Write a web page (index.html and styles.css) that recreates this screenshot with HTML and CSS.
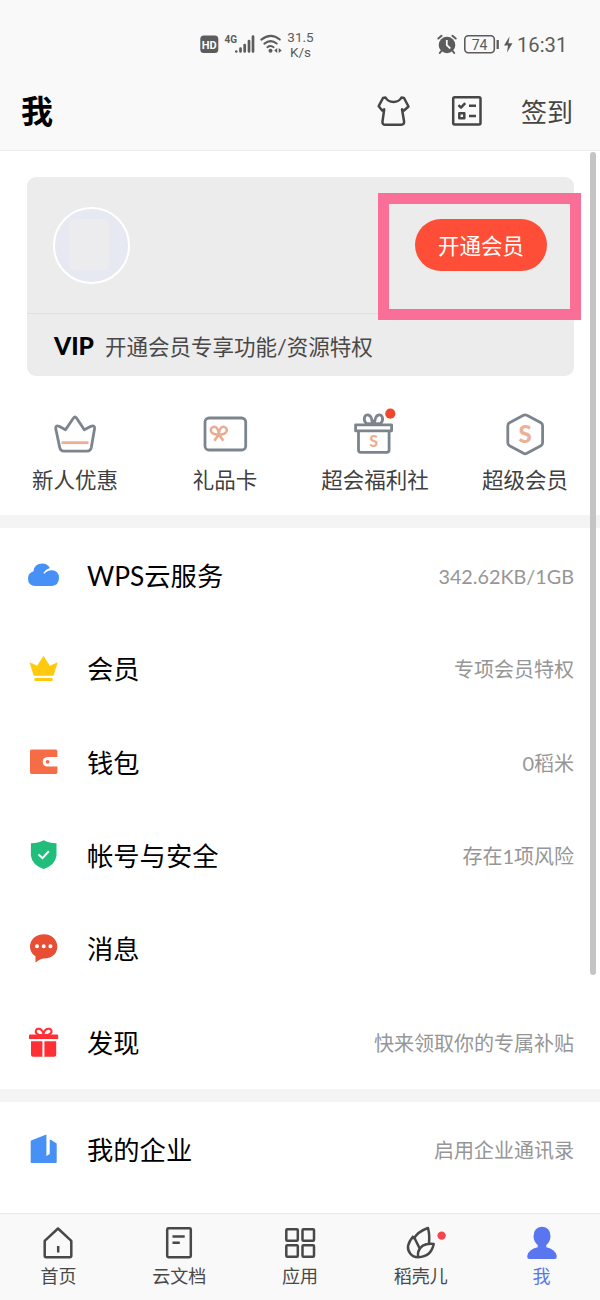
FILE: index.html
```html
<!DOCTYPE html>
<html lang="zh-CN">
<head>
<meta charset="utf-8">
<title>我</title>
<link rel="stylesheet" href="styles.css">
</head>
<body>
<div class="app">
  <header class="top">
    <div class="status">
      <svg class="status-left" width="86" height="28" viewBox="198 30 86 28">
        <rect x="200.300" y="35.500" width="18" height="17.500" rx="3.500" fill="#5c5c5c"/>
        <text x="209.300" y="48.600" class="hd">HD</text>
        <text x="224.500" y="43.300" class="net">4G</text>
        <path d="M236.300 51.500v0M240.500 51.500v-3M244.700 51.500v-6.500M249 51.500v-10.500M253 51.500v-15" class="bars"/>
        <path d="M261.300 39.600q9.500-7.500 18.500 0M264.400 43.600q6.300-5 12.300 0M267.400 47.200q3.200-2.500 6.200 0" class="wifi"/>
        <circle cx="270.500" cy="50.700" r="2" fill="#5c5c5c"/>
        <path d="M277.200 48v5l-3-2.500zM278.700 48v5l3-2.500z" fill="#5c5c5c"/>
      </svg>
      <div class="speed"><span>31.5</span><span>K/s</span></div>
      <svg class="status-right" width="78" height="28" viewBox="436 30 78 28">
        <circle cx="447" cy="45" r="8.300" fill="#5c5c5c"/>
        <path d="M438.300 38.500l3.300-2.700M455.700 38.500l-3.300-2.700M441.300 51l-1.500 2M452.700 51l1.500 2" stroke="#5c5c5c" stroke-width="2" stroke-linecap="round"/>
        <path d="M446.800 40v5.200l3.500 3.300" fill="none" stroke="#f9f9f9" stroke-width="1.800"/>
        <rect x="464.800" y="35.800" width="29.500" height="17" rx="3.500" fill="none" stroke="#5c5c5c" stroke-width="1.600"/>
        <path d="M497.700 40v9" stroke="#5c5c5c" stroke-width="2.300"/>
        <text x="479.500" y="49.600" class="charge">74</text>
        <path d="M509.500 36.500l-5.500 9h4l-1 7 5.500-9.300h-4z" fill="#5c5c5c"/>
      </svg>
      <span class="clock">16:31</span>
    </div>
    <div class="titlebar">
      <h1>我</h1>
      <svg class="line-icon shirt" width="36" height="36" viewBox="376 92 36 36">
        <path d="M385.500 96.500q2.500 4.500 8 4.500t8-4.500l2.500.500 4.500 8.500-4.500 4-2-1.200 2 11.700q.6 3.800-2.800 3.800h-16q-3 0-2.700-3.300l1.700-12.200-2 1.200-3.500-4.300 4.300-8.200z"/>
      </svg>
      <svg class="line-icon tasks" width="36" height="36" viewBox="449 92 36 36">
        <rect x="453.200" y="96.200" width="27.300" height="27.300" rx="1.500"/>
        <path d="M458.500 104.200l2.500 2.500 4.200-4.500M469 104.700h7M469 115h7M459.300 112.200h5v5h-5z"/>
      </svg>
      <span class="signin">签到</span>
    </div>
  </header>

  <main class="content">
    <section class="member-card">
      <div class="profile">
        <div class="avatar"><i></i></div>
        <span class="open-vip">开通会员</span>
      </div>
      <div class="vip-line"><b>VIP</b><span>开通会员专享功能/资源特权</span></div>
      <div class="highlight"></div>
    </section>

    <nav class="quick">
      <div class="quick-item">
        <svg class="outline" width="50" height="50" viewBox="50 409 50 50">
          <path d="M61.500 442.700h27" class="accent"/>
          <path d="M73.500 418q1.500-2 3 0l7.800 11.800 6.700-3.500q4-1.300 3.600 2.200l-3.300 19q-.8 3.700-4.300 3.700H64q-3.500 0-4.300-3.700l-4-19q-.3-3.500 3.300-2.200l6.500 3.500z"/>
        </svg><span>新人优惠</span>
      </div>
      <div class="quick-item">
        <svg class="outline" width="50" height="50" viewBox="200 409 50 50">
          <rect x="205" y="418" width="40.700" height="32" rx="4"/>
          <path d="M218.800 434.300c-9 1-9.500-6-6-7.200s6 2.500 6 7.200c0-4.700 2.500-8.400 6-7.200s3 8.200-6 7.200l-4.500 6.500M218.800 434.300l4.500 6.500" class="bow"/>
        </svg><span>礼品卡</span>
      </div>
      <div class="quick-item">
        <svg class="outline" width="50" height="50" viewBox="350 409 50 50">
          <path d="M371.200 424l-5-.5c-4-5-1-9 2-8.500 3.500.5 4 5 4 9zM375.700 424l5-.5c4-5 1-9-2-8.500-3.500.5-4 5-4 9z"/>
          <rect x="355.600" y="424.800" width="36" height="6"/>
          <path d="M358.500 431v19q0 2.300 2.300 2.300h26q2.300 0 2.300-2.300v-19"/>
          <text x="373.600" y="447" class="money small">S</text>
          <circle cx="390.300" cy="413.700" r="5.100" class="dot"/>
        </svg><span>超会福利社</span>
      </div>
      <div class="quick-item">
        <svg class="outline" width="50" height="50" viewBox="500 409 50 50">
          <path d="M523.500 415.300q1.700-1 3.400 0l14 7.500q1.700 1 1.700 3v17q0 2-1.700 3l-14 7.500q-1.700 1-3.400 0l-14-7.500q-1.700-1-1.700-3v-17q0-2 1.700-3z"/>
          <text x="525.200" y="442.700" class="money">S</text>
        </svg><span>超级会员</span>
      </div>
    </nav>

    <section class="list">
      <div class="row">
        <svg width="34" height="34" viewBox="27 559 34 34">
          <path d="M35.500 586q-7.500-.3-7.500-7.500 0-5.500 5.300-7 1-8 9.200-8 5 0 7.300 4.500-4.500 1.400-6.400 5l1 .8q2.600-3.500 7.300-3.500 7 .3 7.300 7.500 0 7.500-7.300 8.200z" fill="#4790f5"/>
        </svg>
        <span class="label">WPS云服务</span><span class="note size">342.62KB/1GB</span>
      </div>
      <div class="row">
        <svg width="34" height="34" viewBox="27 652 34 34">
          <path d="M43.500 655.700l6.300 10 7.900-3.400-4.200 13.500H33.700l-4.200-13.500 7.700 3.400zM34.500 677.900h18v3.200h-18z" fill="#ffc90e"/>
        </svg>
        <span class="label">会员</span><span class="note">专项会员特权</span>
      </div>
      <div class="row">
        <svg width="34" height="34" viewBox="27 745 34 34">
          <path d="M31.500 749.500h24.200q1.700 0 1.700 1.700v5.800h-9.700q-5 .3-5 4.800t5 4.800h9.700v5.700q0 1.700-1.700 1.700H31.500q-1.500 0-1.500-1.700v-21q0-1.800 1.500-1.800z" fill="#f56c47"/><circle cx="47.600" cy="761.800" r="1.900" fill="#f56c47"/>
        </svg>
        <span class="label">钱包</span><span class="note">0稻米</span>
      </div>
      <div class="row">
        <svg width="34" height="34" viewBox="27 839 34 34">
          <path d="M43.700 840.300q5.300 3 12.800 3v12.500q-1.500 9.500-12.800 13.200-11.500-3.700-12.800-13.200v-12.500q7.500 0 12.800-3z" fill="#20bd7b"/><path d="M38.500 854.500l4 3.600 6.300-6.800" fill="none" stroke="#fff" stroke-width="2"/>
        </svg>
        <span class="label">帐号与安全</span><span class="note">存在1项风险</span>
      </div>
      <div class="row">
        <svg width="34" height="34" viewBox="27 932 34 34">
          <path d="M43.700 934.200c17.500 0 19 24.300 0 24.300q-3 .2-8.200 4v-6.200c-10-7-5.500-22.100 8.200-22.100z" fill="#e84e34"/><path d="M37 946.300v0M43.700 946.300v0M50.400 946.300v0" stroke="#fff" stroke-width="4" stroke-linecap="round"/>
        </svg>
        <span class="label">消息</span>
      </div>
      <div class="row">
        <svg width="34" height="34" viewBox="27 1025 34 34">
          <path d="M30 1034.500h27.200q1 0 1 1v3.500H29v-3.500q0-1 1-1zM31 1041.300h11.400v15.500H33q-2 0-2-2zM44.400 1041.300h11.800v13.500q0 2-2 2h-9.800z" fill="#ff3035"/><path d="M43.400 1035c-5 .5-8.500-1.500-7.500-4.500 1.500-3.500 7-2 7.500 4.500.5-6.500 6.500-8 8-4.500 1 3-3 5-8 4.500z" fill="none" stroke="#ff3035" stroke-width="2"/>
        </svg>
        <span class="label">发现</span><span class="note">快来领取你的专属补贴</span>
      </div>
    </section>

    <section class="list company">
      <div class="row">
        <svg width="34" height="34" viewBox="27 1132 34 34">
          <path d="M31.700 1140.300l14.700-5.800v21.500l3.300-2v-14l1-.3 6 3.700v18.500q0 1-1 1H31q0 0-.3-1v-20.500q0-.8 1-1.100z" fill="#4790f5"/>
        </svg>
        <span class="label">我的企业</span><span class="note">启用企业通讯录</span>
      </div>
    </section>
    <div class="scrollbar"></div>
  </main>

  <nav class="tabs">
    <div class="tab">
      <svg width="36" height="36" viewBox="40.500 1225 36 36"><path d="M45.200 1240.800l13.300-12.300 13.300 12.300v15q0 1.400-1.400 1.400H46.600q-1.400 0-1.400-1.400zM58.700 1246v6.500"/></svg><span>首页</span>
    </div>
    <div class="tab">
      <svg width="36" height="36" viewBox="161 1225 36 36"><rect x="167.200" y="1228.200" width="23.600" height="29" rx="1.200"/><path d="M172.500 1236.500h12.200M172.500 1242.700h7.300"/></svg><span>云文档</span>
    </div>
    <div class="tab">
      <svg width="36" height="36" viewBox="282 1225 36 36"><rect x="286.300" y="1229.200" width="11.500" height="11.500" rx="1"/><rect x="302.500" y="1229.200" width="11.500" height="11.500" rx="1"/><rect x="286.300" y="1245.300" width="11.500" height="11.500" rx="1"/><rect x="302.500" y="1245.300" width="11.500" height="11.500" rx="1"/></svg><span>应用</span>
    </div>
    <div class="tab">
      <svg width="50" height="36" viewBox="396 1225 50 36"><path d="M413.800 1239.500q2.700-7.500 14.200-11.500 2 7.500.8 16.500M413.500 1236l6.200 12.500M413.500 1236q-9 10.500-3.300 17.500 2.800 3.700 8 3.700 13-.5 15.500-13.200-12.500-1.300-15.500 8-.5 2.500 0 5"/><circle cx="441.600" cy="1235.600" r="4.200" class="dot"/></svg><span>稻壳儿</span>
    </div>
    <div class="tab active">
      <svg width="36" height="36" viewBox="523.500 1225 36 36"><path d="M541.500 1226.800q8.500.5 8.500 9.700-.3 5.500-4.200 8.500v2.300q9.200 2 10.400 8.500.3 3.200-2 3.200h-25.400q-2.300 0-2-3.200 1.200-6.500 10.400-8.500v-2.300q-3.900-3-4.200-8.500 0-9.200 8.500-9.700z"/></svg><span>我</span>
    </div>
  </nav>
</div>
</body>
</html>
```
FILE: styles.css
```css
* { box-sizing: border-box; }
body {
  margin: 0;
  background: #fff;
  color: #000;
  font-family: Lato, "Noto Sans CJK SC", sans-serif;
}
svg { display: block; flex: none; overflow: visible; }
.app {
  width: 600px;
  height: 1300px;
  display: flex;
  flex-direction: column;
  overflow: hidden;
}

.top {
  height: 151px;
  flex: none;
  background: #f9f9f9;
  border-bottom: 1px solid #ebebeb;
}
.status {
  height: 72px;
  display: flex;
  align-items: center;
  padding: 17px 0 1px 198px;
  color: #5c5c5c;
}
.hd { font: bold 11px Roboto, sans-serif; fill: #fff; text-anchor: middle; }
.net { font: bold 10px Roboto, sans-serif; fill: #5c5c5c; }
.bars { stroke: #5c5c5c; stroke-width: 2.7; stroke-linecap: round; }
.wifi { fill: none; stroke: #5c5c5c; stroke-width: 2; stroke-linecap: round; }
.charge { font: 14px Roboto, sans-serif; fill: #5c5c5c; text-anchor: middle; }
.speed {
  width: 33px;
  padding-top: 2px;
  display: flex;
  flex-direction: column;
  align-items: center;
  font: 13.500px/15px Roboto, sans-serif;
}
.status-right { margin-left: 119px; }
.clock { margin-left: 3px; padding-top: 2px; font: 20.200px/28px Roboto, sans-serif; }
.titlebar {
  height: 78px;
  display: flex;
  align-items: center;
  padding: 0 27px 0 21px;
}
h1 { margin: 0; font-size: 32px; line-height: 44px; font-weight: 700; flex: 1; }
.line-icon { fill: none; stroke: #464646; stroke-width: 2.5; stroke-linejoin: round; }
.shirt { margin-right: 37px; }
.tasks { margin-right: 36px; }
.signin { padding-top: 1px; font-size: 26px; line-height: 38px; color: #464646; }

.content { position: relative; height: 1062px; flex: none; overflow: hidden; }
.member-card {
  position: relative;
  margin: 26px 26px 0 27px;
  height: 199px;
  border-radius: 9px;
  background: #ececec;
}
.profile {
  height: 137px;
  border-bottom: 1px solid #dfdfdf;
  display: flex;
  justify-content: space-between;
  padding: 30px 27px 0 26px;
}
.avatar {
  width: 77px;
  height: 77px;
  border: 2px solid #fff;
  border-radius: 50%;
  background: #e6e8f2;
  padding: 10px 0 0 14px;
}
.avatar i { display: block; width: 40px; height: 51px; border-radius: 5px; background: #ececee; }
.open-vip {
  width: 132px;
  height: 52px;
  margin-top: 12px;
  border-radius: 26px;
  background: #ff4e38;
  color: #fff;
  font-size: 21.500px;
  line-height: 54px;
  text-align: center;
}
.vip-line { height: 61px; display: flex; align-items: center; padding: 2px 0 0 27px; color: #484848; font-size: 21.500px; }
.vip-line b { width: 51px; color: #000; font-size: 24.500px; font-weight: 900; }
.highlight { position: absolute; left: 351px; top: 16px; width: 203px; height: 127px; border: 11px solid #f96f97; }

.quick { height: 139px; padding-top: 33px; display: grid; grid-template-columns: repeat(4, 150px); }
.quick-item {
  display: flex;
  flex-direction: column;
  align-items: center;
  font-size: 21.500px;
  line-height: 30px;
  color: #404040;
}
.quick-item span { margin-top: 6px; }
.outline { fill: none; stroke: #7c858e; stroke-width: 2.8; stroke-linejoin: round; }
.outline .accent { stroke: #ecae94; }
.outline .bow { stroke: #e8ac91; stroke-width: 2.5; }
.outline .money { font: 900 24px Lato, sans-serif; fill: #edb094; stroke: none; text-anchor: middle; }
.outline .small { font-size: 16px; }
.outline .dot { fill: #ee472d; stroke: none; }

.list { border-top: 13px solid #f4f4f4; padding-top: 1px; }
.row { height: 93.300px; display: flex; align-items: center; padding: 0 26px 0 27px; }
.label { margin-left: 26px; padding-top: 1px; flex: 1; font-size: 26.300px; line-height: 38px; }
.note { padding-top: 1px; font-size: 20px; line-height: 30px; color: #969696; }
.size { padding-top: 0; font-size: 19.800px; }
.scrollbar { position: absolute; right: 4px; top: 1px; width: 6px; height: 823px; border-radius: 3px; background: #c4c4c4; }

.tabs {
  height: 87px;
  margin: 0 -2px;
  border-top: 1px solid #e9e9e9;
  background: #f9f9f9;
  display: grid;
  grid-template-columns: repeat(5, 1fr);
  padding-top: 11px;
}
.tab { display: flex; flex-direction: column; align-items: center; font-size: 18px; line-height: 26px; color: #484848; }
.tab svg { fill: none; stroke: #484848; stroke-width: 2.5; stroke-linejoin: round; }
.tab span { margin-top: 2px; }
.tab .dot { fill: #f8444d; stroke: none; }
.active { color: #5975f0; }
.tab.active svg { fill: #5975f0; stroke: none; }
```
